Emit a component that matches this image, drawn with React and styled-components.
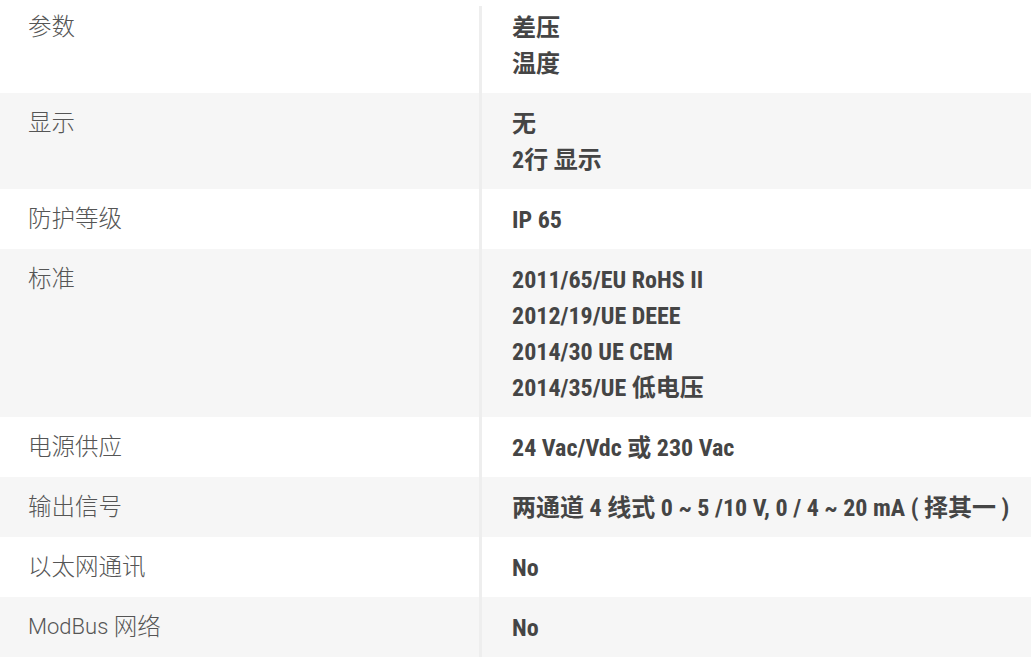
import React from "react";
import styled, { createGlobalStyle } from "styled-components";

const Global = createGlobalStyle`
  html, body { margin: 0; padding: 0; background: #fff; }
  body { font-family: Roboto, "Noto Sans CJK SC", sans-serif; }
`;

const Table = styled.div`
  display: flex;
  flex-direction: column;
  width: 1031px;
  margin-top: -3px;
`;

const Row = styled.div`
  display: grid;
  grid-template-columns: 479px 1fr;
  background: ${(p) => (p.$shaded ? "#f6f6f6" : "#ffffff")};
`;

const Label = styled.div`
  padding: 12px 0 12px 28px;
  font-family: Roboto, "Noto Sans CJK SC", sans-serif;
  font-weight: 300;
  font-size: 22px;
  line-height: 36px;
  color: #555555;
`;

const Cjk = styled.span`
  font-size: 23.5px;
  line-height: 0;
  position: relative;
  top: 1px;
`;

const Value = styled.div`
  padding: ${(p) => (p.$first ? "4px" : "13px")} 0 11px 30px;
  margin-top: ${(p) => (p.$first ? "9px" : "0")};
  border-left: 3px solid #eeeeee;
  font-family: Roboto, "Noto Sans CJK SC", sans-serif;
  font-weight: 700;
  font-stretch: 75%;
  font-size: 24px;
  line-height: 36px;
  color: #454545;
  white-space: nowrap;
`;

const Line = styled.div``;

const rows = [
  ["参数", ["差压", "温度"]],
  ["显示", ["无", "2行 显示"]],
  ["防护等级", ["IP 65"]],
  ["标准", ["2011/65/EU RoHS II", "2012/19/UE DEEE", "2014/30 UE CEM", "2014/35/UE 低电压"]],
  ["电源供应", ["24 Vac/Vdc 或 230 Vac"]],
  ["输出信号", ["两通道 4 线式 0 ~ 5 /10 V, 0 / 4 ~ 20 mA ( 择其一 )"]],
  ["以太网通讯", ["No"]],
  ["ModBus 网络", ["No"]],
];

function LabelText({ text }) {
  const parts = text.split(/([\u4e00-\u9fff]+)/).filter(Boolean);
  return parts.map((p, i) =>
    /[\u4e00-\u9fff]/.test(p) ? <Cjk key={i}>{p}</Cjk> : <React.Fragment key={i}>{p}</React.Fragment>
  );
}

export default function App() {
  return (
    <>
      <Global />
      <Table>
        {rows.map(([label, values], i) => (
          <Row key={label} $shaded={i % 2 === 1}>
            <Label>
              <LabelText text={label} />
            </Label>
            <Value $first={i === 0}>
              {values.map((v) => (
                <Line key={v}>{v}</Line>
              ))}
            </Value>
          </Row>
        ))}
      </Table>
    </>
  );
}
